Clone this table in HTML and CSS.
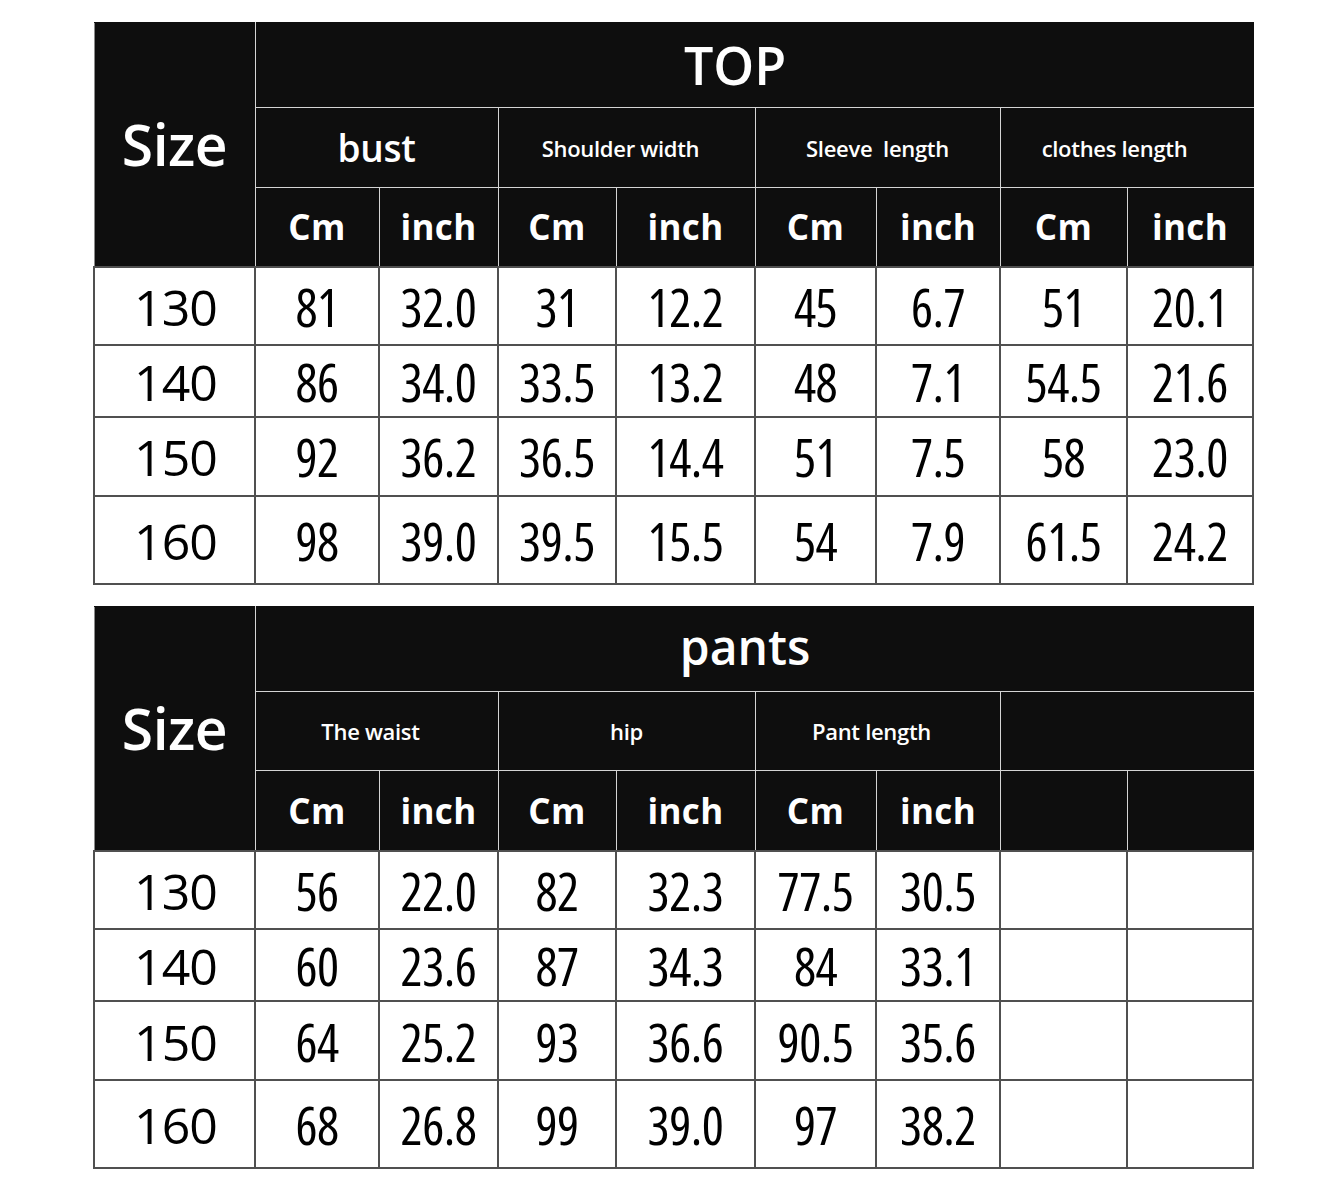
FILE: index.html
```html
<!DOCTYPE html>
<html>
<head>
<meta charset="utf-8">
<link rel="stylesheet" href="styles.css">
</head>
<body>
<div class="page">
<table class="chart">
  <colgroup>
    <col class="c0"><col class="c1"><col class="c2"><col class="c3"><col class="c4"><col class="c5"><col class="c6"><col class="c7"><col class="c8">
  </colgroup>
  <thead>
    <tr class="r-title">
      <th rowspan="3" class="size">Size</th>
      <th colspan="8" class="title top">TOP</th>
    </tr>
    <tr class="r-group">
      <th colspan="2" class="group big">bust</th>
      <th colspan="2" class="group shift-l">Shoulder width</th>
      <th colspan="2" class="group">Sleeve&nbsp; length</th>
      <th colspan="2" class="group shift-l2">clothes length</th>
    </tr>
    <tr class="r-unit">
      <th class="unit">Cm</th><th class="unit">inch</th>
      <th class="unit">Cm</th><th class="unit">inch</th>
      <th class="unit">Cm</th><th class="unit">inch</th>
      <th class="unit">Cm</th><th class="unit">inch</th>
    </tr>
  </thead>
  <tbody>
    <tr class="d1"><td class="sz">130</td><td>81</td><td>32.0</td><td>31</td><td>12.2</td><td>45</td><td>6.7</td><td>51</td><td>20.1</td></tr>
    <tr class="d2"><td class="sz">140</td><td>86</td><td>34.0</td><td>33.5</td><td>13.2</td><td>48</td><td>7.1</td><td>54.5</td><td>21.6</td></tr>
    <tr class="d3"><td class="sz">150</td><td>92</td><td>36.2</td><td>36.5</td><td>14.4</td><td>51</td><td>7.5</td><td>58</td><td>23.0</td></tr>
    <tr class="d4"><td class="sz">160</td><td>98</td><td>39.0</td><td>39.5</td><td>15.5</td><td>54</td><td>7.9</td><td>61.5</td><td>24.2</td></tr>
  </tbody>
</table>

<table class="chart second">
  <colgroup>
    <col class="c0"><col class="c1"><col class="c2"><col class="c3"><col class="c4"><col class="c5"><col class="c6"><col class="c7"><col class="c8">
  </colgroup>
  <thead>
    <tr class="r-title">
      <th rowspan="3" class="size">Size</th>
      <th colspan="8" class="title lower">pants</th>
    </tr>
    <tr class="r-group g2">
      <th colspan="2" class="group shift-l">The waist</th>
      <th colspan="2" class="group">hip</th>
      <th colspan="2" class="group shift-l">Pant length</th>
      <th colspan="2" class="group"></th>
    </tr>
    <tr class="r-unit u2">
      <th class="unit">Cm</th><th class="unit">inch</th>
      <th class="unit">Cm</th><th class="unit">inch</th>
      <th class="unit">Cm</th><th class="unit">inch</th>
      <th class="unit"></th><th class="unit"></th>
    </tr>
  </thead>
  <tbody>
    <tr class="d1"><td class="sz">130</td><td>56</td><td>22.0</td><td>82</td><td>32.3</td><td>77.5</td><td>30.5</td><td></td><td></td></tr>
    <tr class="d2"><td class="sz">140</td><td>60</td><td>23.6</td><td>87</td><td>34.3</td><td>84</td><td>33.1</td><td></td><td></td></tr>
    <tr class="d3"><td class="sz">150</td><td>64</td><td>25.2</td><td>93</td><td>36.6</td><td>90.5</td><td>35.6</td><td></td><td></td></tr>
    <tr class="d4"><td class="sz">160</td><td>68</td><td>26.8</td><td>99</td><td>39.0</td><td>97</td><td>38.2</td><td></td><td></td></tr>
  </tbody>
</table>
</div>
</body>
</html>
```
FILE: styles.css
```css
html, body {
  margin: 0;
  padding: 0;
  background: #ffffff;
}

.page {
  padding: 22px 0 0 93px;
  font-family: "Open Sans", "Noto Sans", "Liberation Sans", sans-serif;
}

.chart {
  width: 1159px;
  table-layout: fixed;
  border-collapse: collapse;
}

.chart.second {
  margin-top: 21px;
}

.c0 { width: 161px; }
.c1 { width: 124px; }
.c2 { width: 119px; }
.c3 { width: 118px; }
.c4 { width: 139px; }
.c5 { width: 121px; }
.c6 { width: 124px; }
.c7 { width: 127px; }
.c8 { width: 126px; }

th {
  background: #0e0e0e;
  color: #ffffff;
  border: 1px solid #d4d4d4;
  padding: 0;
  text-align: center;
  vertical-align: middle;
  line-height: 1;
}

thead tr:first-child th {
  border-top-color: #0e0e0e;
}

th.size {
  font-size: 57px;
  font-weight: 600;
  border-left-color: #8a8a8a;
  letter-spacing: -0.5px;
  font-stretch: 92%;
}

th.title {
  font-size: 52px;
  font-weight: 600;
  border-right-color: #0e0e0e;
  font-stretch: 90%;
}

th.title.top {
  padding-right: 38px;
}

th.title.lower {
  font-size: 48px;
  padding-bottom: 4px;
  padding-right: 18px;
}

th.group {
  font-size: 22px;
  font-weight: 600;
  letter-spacing: -0.3px;
}

th.group.shift-l {
  padding-right: 12px;
}

th.group.shift-l2 {
  padding-right: 24px;
}

th.group.big {
  font-size: 37px;
  font-weight: 600;
  font-stretch: 90%;
}

th.unit {
  font-size: 35px;
  font-weight: 700;
  letter-spacing: 0.3px;
  font-stretch: 92%;
}

.r-group th:last-child,
.r-unit th:last-child {
  border-right-color: #0e0e0e;
}

.r-title { height: 85px; }
.r-group { height: 80px; }
.r-unit { height: 79px; }
.r-group.g2 { height: 79px; }
.r-unit.u2 { height: 81px; }

td {
  border: 2px solid #505050;
  padding: 0;
  text-align: center;
  vertical-align: middle;
  font-size: 52px;
  font-weight: 500;
  font-stretch: 75%;
  color: #000000;
  line-height: 1;
  letter-spacing: -0.5px;
  padding-top: 2px;
}

td.sz {
  font-size: 50px;
  font-stretch: 92%;
  letter-spacing: -1px;
  padding-left: 2px;
}

.d1 { height: 78px; }
.d2 { height: 72px; }
.d3 { height: 79px; }
.d4 { height: 88px; }
```
